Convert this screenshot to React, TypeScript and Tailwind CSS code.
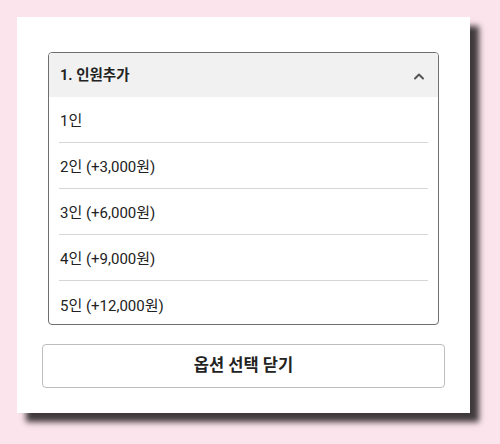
const options = ['1인', '2인 (+3,000원)', '3인 (+6,000원)', '4인 (+9,000원)', '5인 (+12,000원)']

export default function App() {
  return (
    <div
      className="w-[500px] h-[444px] bg-[#fce4ec] pt-[17px] pl-[17px]"
      style={{ fontFamily: 'Roboto, "Noto Sans CJK KR", sans-serif' }}
    >
      <div className="w-[453px] h-[396px] bg-white shadow-[9px_9px_6px_rgba(0,0,0,0.75)] px-[25px] pt-[35px]">
        {/* accordion */}
        <div className="mx-[6px] h-[273px] border border-[#6f6f6f] rounded-[4px] overflow-hidden">
          <div className="h-[44px] bg-[#f1f1f1] flex items-center justify-between pl-[11px] pr-[13px] pt-[2px]">
            <span className="text-[14.5px] font-bold text-[#222]">1. 인원추가</span>
            <svg width="12" height="8" viewBox="0 0 12 8" fill="none">
              <path d="M2 6.5 L6 2.5 L10 6.5" stroke="#555" strokeWidth="2" strokeLinecap="round" strokeLinejoin="round" />
            </svg>
          </div>
          <div className="px-[10px]">
            {options.map((o, i) => (
              <div
                key={i}
                className={`h-[46px] flex items-center pl-[1px] pt-[4px] text-[15px] text-[#222] ${
                  i < options.length - 1 ? 'border-b border-[#d6d6d6]' : ''
                }`}
              >
                {o}
              </div>
            ))}
          </div>
        </div>

        <button className="mt-[19px] w-full h-[44px] border border-[#bdbdbd] rounded-[4px] bg-white text-[16.5px] font-bold text-[#222] flex items-center justify-center">
          옵션 선택 닫기
        </button>
      </div>
    </div>
  )
}
